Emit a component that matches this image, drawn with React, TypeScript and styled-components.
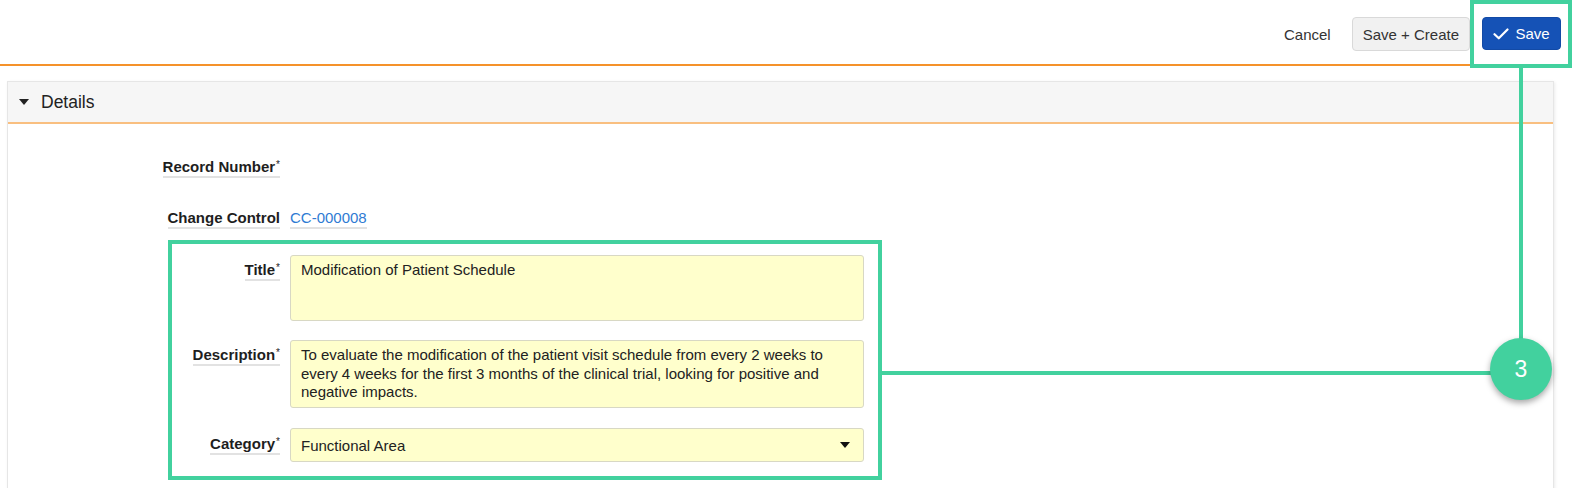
import React from "react";
import styled, { createGlobalStyle } from "styled-components";

const GREEN = "#42d19e";

const GlobalStyle = createGlobalStyle`
  html, body {
    margin: 0;
    padding: 0;
    background: #ffffff;
    font-family: "Liberation Sans", Arial, sans-serif;
    color: #222222;
  }
  * {
    box-sizing: border-box;
  }
`;

export default function App() {
  return (
    <Page>
      <GlobalStyle />
      <TopBar>
        <TextButton>Cancel</TextButton>
        <GreyButton>Save + Create</GreyButton>
        <SaveFrame>
          <PrimaryButton>
            <svg width="16" height="12" viewBox="0 0 16 12" fill="none">
              <path
                d="M1.5 6.2 L5.8 10.3 L14.5 1.5"
                stroke="#ffffff"
                strokeWidth="2.2"
                strokeLinecap="round"
                strokeLinejoin="round"
              />
            </svg>
            Save
          </PrimaryButton>
          <Callout>
            <Stem />
            <Badge>3</Badge>
          </Callout>
        </SaveFrame>
      </TopBar>

      <Panel>
        <PanelHeader>
          <Caret $size={11} $color="#222" />
          <PanelTitle>Details</PanelTitle>
        </PanelHeader>
        <PanelBody>
          <Row $labelWidth={130} $gapAfter={31}>
            <LabelCell>
              <LabelText>
                Record Number<Req>*</Req>
              </LabelText>
            </LabelCell>
          </Row>
          <Row $labelWidth={130} $gapAfter={11}>
            <LabelCell>
              <LabelText>Change Control</LabelText>
            </LabelCell>
            <div>
              <LinkValue>CC-000008</LinkValue>
            </div>
          </Row>

          <Highlight>
            <Connector />
            <Row $labelWidth={108} $gapAfter={19}>
              <LabelCell $offset={6}>
                <LabelText>
                  Title<Req>*</Req>
                </LabelText>
              </LabelCell>
              <TextBox $height={66}>Modification of Patient Schedule</TextBox>
            </Row>
            <Row $labelWidth={108} $gapAfter={20}>
              <LabelCell $offset={6}>
                <LabelText>
                  Description<Req>*</Req>
                </LabelText>
              </LabelCell>
              <TextBox $height={68}>
                To evaluate the modification of the patient visit schedule from
                every 2 weeks to every 4 weeks for the first 3 months of the
                clinical trial, looking for positive and negative impacts.
              </TextBox>
            </Row>
            <Row $labelWidth={108} $gapAfter={0}>
              <LabelCell $offset={7}>
                <LabelText>
                  Category<Req>*</Req>
                </LabelText>
              </LabelCell>
              <SelectBox>
                <span>Functional Area</span>
                <Caret $size={11} $color="#111" />
              </SelectBox>
            </Row>
          </Highlight>
        </PanelBody>
      </Panel>
    </Page>
  );
}

const Page = styled.div`
  width: 1572px;
  height: 488px;
  overflow: hidden;
`;

const TopBar = styled.header`
  height: 66px;
  display: flex;
  justify-content: flex-end;
  align-items: flex-start;
  border-bottom: 2px solid #f5922a;
`;

const TextButton = styled.button`
  margin-top: 17px;
  margin-right: 11px;
  height: 34px;
  padding: 0 10px;
  border: none;
  background: transparent;
  font-family: inherit;
  font-size: 15px;
  color: #333;
`;

const GreyButton = styled.button`
  margin-top: 17px;
  height: 34px;
  padding: 0 10px;
  border: 1px solid #d9d9d9;
  border-radius: 4px;
  background: #f1f1f1;
  font-family: inherit;
  font-size: 15px;
  color: #333;
`;

const SaveFrame = styled.div`
  position: relative;
  z-index: 2;
  width: 102px;
  height: 68px;
  border: 4px solid ${GREEN};
  padding: 13px 0 0 8px;
  display: flex;
  align-items: flex-start;
`;

const PrimaryButton = styled.button`
  width: 79px;
  height: 33px;
  display: flex;
  align-items: center;
  justify-content: center;
  gap: 6px;
  padding: 0;
  border: 1px solid #124aa6;
  border-radius: 4px;
  background: #1552b6;
  color: #ffffff;
  font-family: inherit;
  font-size: 15px;
`;

const Callout = styled.div`
  position: absolute;
  top: 100%;
  left: 50%;
  transform: translateX(-50%);
  margin-top: 4px;
  display: flex;
  flex-direction: column;
  align-items: center;
`;

const Stem = styled.div`
  width: 4px;
  height: 272px;
  background: ${GREEN};
`;

const Badge = styled.div`
  width: 62px;
  height: 62px;
  margin-top: -2px;
  border-radius: 50%;
  background: ${GREEN};
  box-shadow: 0 3px 6px rgba(0, 0, 0, 0.35);
  display: flex;
  align-items: center;
  justify-content: center;
  color: #ffffff;
  font-family: "Liberation Sans", Arial, sans-serif;
  font-size: 23px;
`;

const Panel = styled.section`
  margin: 15px 18px 0 7px;
  border: 1px solid #e6e6e6;
  border-bottom: none;
  box-shadow: 1px 1px 3px rgba(0, 0, 0, 0.08);
  background: #ffffff;
`;

const PanelHeader = styled.div`
  height: 42px;
  display: flex;
  align-items: center;
  padding-left: 11px;
  background: #f6f6f6;
  border-bottom: 2px solid #f9bf80;
`;

const Caret = styled.span<{ $size: number; $color: string }>`
  display: inline-block;
  width: 0;
  height: 0;
  border-left: ${(p) => p.$size / 2}px solid transparent;
  border-right: ${(p) => p.$size / 2}px solid transparent;
  border-top: ${(p) => Math.round(p.$size * 0.55)}px solid ${(p) => p.$color};
`;

const PanelTitle = styled.h2`
  margin: 0 0 0 12px;
  font-size: 17.5px;
  font-weight: normal;
  color: #222;
`;

const PanelBody = styled.div`
  padding: 34px 0 40px 142px;
`;

const Row = styled.div<{ $labelWidth: number; $gapAfter: number }>`
  display: grid;
  grid-template-columns: ${(p) => p.$labelWidth}px 574px;
  column-gap: 10px;
  align-items: start;
  margin-bottom: ${(p) => p.$gapAfter}px;
`;

const LabelCell = styled.div<{ $offset?: number }>`
  text-align: right;
  padding-top: ${(p) => p.$offset ?? 0}px;
`;

const LabelText = styled.span`
  display: inline-block;
  font-size: 15px;
  font-weight: bold;
  line-height: 18px;
  color: #1e1e1e;
  border-bottom: 2px solid #e2e2e2;
`;

const Req = styled.span`
  font-size: 10px;
  font-weight: normal;
  vertical-align: top;
  position: relative;
  top: -2px;
  margin-left: 1px;
`;

const LinkValue = styled.span`
  display: inline-block;
  font-size: 15px;
  line-height: 18px;
  color: #2f7bd3;
  border-bottom: 2px solid #e2e2e2;
`;

const Highlight = styled.div`
  position: relative;
  width: 714px;
  margin-left: 18px;
  padding: 11px 14px 14px 0;
  border: 4px solid ${GREEN};
`;

const Connector = styled.div`
  position: absolute;
  left: 100%;
  top: 127px;
  width: 612px;
  height: 4px;
  margin-left: 4px;
  background: ${GREEN};
`;

const TextBox = styled.div<{ $height: number }>`
  height: ${(p) => p.$height}px;
  padding: 5px 10px;
  background: #ffffcc;
  border: 1px solid #d8d8c4;
  border-radius: 3px;
  font-size: 15px;
  line-height: 18.5px;
  color: #222;
`;

const SelectBox = styled.div`
  height: 34px;
  display: flex;
  align-items: center;
  justify-content: space-between;
  padding: 0 13px 0 10px;
  background: #ffffcc;
  border: 1px solid #d8d8c4;
  border-radius: 3px;
  font-size: 15px;
  color: #222;
`;
